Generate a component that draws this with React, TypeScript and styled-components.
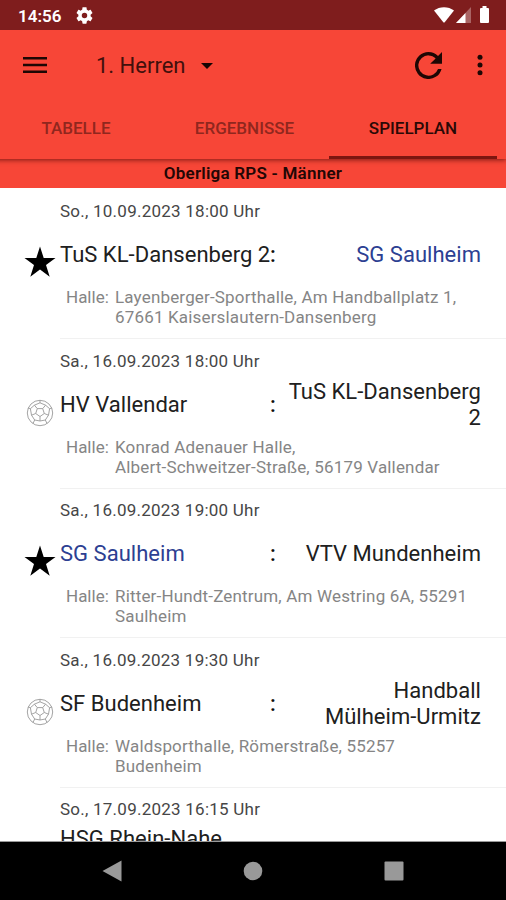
import React from "react";
import styled, { createGlobalStyle } from "styled-components";

const GlobalStyle = createGlobalStyle`
  *, *::before, *::after { box-sizing: border-box; }
  body { margin: 0; background: #fff; font-family: Roboto, "Liberation Sans", sans-serif; }
  svg { display: block; flex: none; }
`;

const Screen = styled.div`
  width: 506px;
  height: 900px;
  display: flex;
  flex-direction: column;
  overflow: hidden;
  background: #fff;
  color: #101010;
`;

const StatusBar = styled.header`
  flex: none;
  height: 30px;
  display: flex;
  align-items: center;
  padding: 0 15px 0 18px;
  background: #7f1d1d;
  color: #fff;
`;

const Clock = styled.span`
  width: 58px;
  font-size: 17px;
  font-weight: 600;
  line-height: 30px;
  letter-spacing: 0;
  padding-top: 2px;
`;

const StatusIcons = styled.div`
  margin-left: auto;
  display: flex;
  align-items: center;
  gap: 2px;
`;

const AppBar = styled.div`
  flex: none;
  position: relative;
  z-index: 2;
  height: 71px;
  display: flex;
  align-items: center;
  padding: 0 20px 1px 23px;
  background: #f74637;
`;

const IconButton = styled.button`
  display: flex;
  padding: 0;
  border: 0;
  background: none;
  color: #1d0704;
`;

const TeamPicker = styled.button`
  display: flex;
  align-items: center;
  gap: 15px;
  margin: 2px auto 0 49px;
  padding: 0;
  border: 0;
  background: none;
  font: 400 22px/30px Roboto, sans-serif;
  color: #42100c;
`;

const Tabs = styled.nav`
  flex: none;
  position: relative;
  z-index: 1;
  height: 58px;
  display: grid;
  grid-template-columns: 168px 169px 168px;
  padding-right: 9px;
  margin-left: -8px;
  background: #f74637;
  box-shadow: 0 1px 5px rgba(60, 0, 0, 0.65);
`;

const Tab = styled.button<{ $active?: boolean }>`
  padding: 0 0 1px;
  border: 0;
  border-bottom: 3px solid ${(p) => (p.$active ? "#7d1610" : "transparent")};
  background: none;
  font: 500 17px/53px Roboto, sans-serif;
  color: ${(p) => (p.$active ? "#2a0906" : "#90271e")};
`;

const LeagueTitle = styled.h1`
  flex: none;
  height: 29px;
  margin: 0;
  background: #f74637;
  text-align: center;
  font-size: 17px;
  font-weight: 600;
  line-height: 29px;
  letter-spacing: 0.23px;
  color: #220705;
`;

const Schedule = styled.main`
  flex: 1;
  min-height: 0;
  overflow: hidden;
  padding-top: 2px;
  border-bottom: 1px solid #999;
`;

const Match = styled.article`
  height: 149.5px;
  display: grid;
  grid-template-columns: 40px 421px;
  grid-template-rows: 38px 53px 46px;
  padding-left: 20px;
`;

const Marker = styled.div<{ $ball?: boolean }>`
  grid-row: 2;
  display: flex;
  justify-content: center;
  padding-top: ${(p) => (p.$ball ? 21 : 18)}px;
`;

const Kickoff = styled.time`
  grid-column: 2;
  font-size: 17px;
  line-height: 20px;
  letter-spacing: 0.24px;
  padding-top: 11px;
  color: #464646;
`;

const Pairing = styled.div<{ $top?: boolean }>`
  grid-column: 2;
  display: grid;
  grid-template-columns: 210px 8px 1fr;
  align-items: ${(p) => (p.$top ? "start" : "center")};
  padding-top: ${(p) => (p.$top ? 0 : 1)}px;
  font-size: 22px;
  line-height: 26px;
  letter-spacing: 0.03px;
`;

const Team = styled.span<{ $own?: boolean; $away?: boolean }>`
  white-space: pre;
  text-align: ${(p) => (p.$away ? "right" : "left")};
  color: ${(p) => (p.$own ? "#2c4092" : "#202020")};
`;

const Colon = styled.span`
  font-weight: 500;
`;

const Venue = styled.div`
  grid-column: 2;
  display: grid;
  grid-template-columns: 49px 1fr;
  padding: 6px 0 0 6px;
  font-size: 17px;
  line-height: 20px;
  color: #858585;
`;

const Address = styled.span`
  white-space: pre;
  letter-spacing: 0.17px;
`;

const Divider = styled.hr`
  grid-column: 2;
  width: 446px;
  height: 1px;
  margin: 11px 0 0;
  border: 0;
  background: #f1f1f1;
`;

const NavBar = styled.footer`
  flex: none;
  height: 58px;
  display: flex;
  align-items: center;
  justify-content: space-between;
  padding: 0 102px;
  background: #000;
`;

const Star = () => (
  <svg width="32" height="32" viewBox="0 0 32 32">
    <path d="M16 .5 19.700 12H31.500L22 19l3.700 11.800L16 23.600 6.300 30.800 10 19 .5 12h11.800z" fill="#000" />
  </svg>
);

const Ball = () => (
  <svg width="28" height="28" viewBox="0 0 28 28" fill="none" stroke="#999" strokeWidth="0.9">
    <circle cx="14" cy="14" r="12.700" />
    <path d="m14 17.500-4.300-3 1.600-4.900h5.400l1.600 4.900zM14 17.500V22M9.700 14.500l-4.200 1.700M11.300 9.600 8.400 6.200M16.700 9.600l2.900-3.400M18.300 14.500l4.200 1.700M8.400 6.200 14 3.800l5.600 2.400M8.400 6.200l-4 3.500 1.100 6.500L8.700 21l5.300 1 5.300-1 3.200-4.800 1.100-6.500-4-3.500M14 3.800V1.300M4.400 9.700 2 9M23.600 9.700 26 9M8.700 21l-1.800 3.600M19.300 21l1.800 3.600" />
  </svg>
);

const Gear = () => (
  <svg width="17" height="17" viewBox="2 2 20 20" fill="#fff">
    <path d="M19.140 12.940c.04-.3.060-.61.060-.94 0-.32-.02-.64-.07-.94l2.030-1.580c.18-.14.230-.41.120-.61l-1.920-3.320c-.12-.22-.37-.29-.59-.22l-2.390.96c-.5-.38-1.030-.7-1.620-.94l-.36-2.540c-.04-.24-.24-.41-.48-.41h-3.840c-.24 0-.43.170-.47.410l-.36 2.540c-.59.240-1.130.570-1.620.940l-2.390-.96c-.22-.08-.47 0-.59.220L2.740 8.870c-.12.210-.08.470.12.610l2.030 1.580c-.05.300-.09.630-.09.940s.02.640.07.940l-2.030 1.580c-.18.140-.23.410-.12.610l1.920 3.320c.12.220.37.290.59.220l2.390-.96c.5.380 1.030.700 1.620.940l.36 2.540c.05.240.24.410.48.410h3.840c.24 0 .44-.17.470-.41l.36-2.540c.59-.24 1.130-.56 1.620-.94l2.390.96c.22.080.47 0 .59-.22l1.920-3.320c.12-.22.070-.47-.12-.61l-2.010-1.580zM12 15.200A3.200 3.200 0 1 1 12 8.800a3.200 3.200 0 0 1 0 6.400z" />
  </svg>
);

type Fixture = {
  kickoff: string;
  home: string;
  away?: string;
  own?: "home" | "away";
  venue?: string;
};

const fixtures: Fixture[] = [
  {
    kickoff: "So., 10.09.2023 18:00 Uhr",
    home: "TuS KL-Dansenberg 2",
    away: "SG Saulheim",
    own: "away",
    venue: "Layenberger-Sporthalle, Am Handballplatz 1,\n67661 Kaiserslautern-Dansenberg",
  },
  {
    kickoff: "Sa., 16.09.2023 18:00 Uhr",
    home: "HV Vallendar",
    away: "TuS KL-Dansenberg\n2",
    venue: "Konrad Adenauer Halle,\nAlbert-Schweitzer-Straße, 56179 Vallendar",
  },
  {
    kickoff: "Sa., 16.09.2023 19:00 Uhr",
    home: "SG Saulheim",
    away: "VTV Mundenheim",
    own: "home",
    venue: "Ritter-Hundt-Zentrum, Am Westring 6A, 55291\nSaulheim",
  },
  {
    kickoff: "Sa., 16.09.2023 19:30 Uhr",
    home: "SF Budenheim",
    away: "Handball\nMülheim-Urmitz",
    venue: "Waldsporthalle, Römerstraße, 55257\nBudenheim",
  },
  { kickoff: "So., 17.09.2023 16:15 Uhr", home: "HSG Rhein-Nahe" },
];

export default function App() {
  return (
    <Screen>
      <GlobalStyle />
      <StatusBar>
        <Clock>14:56</Clock>
        <Gear />
        <StatusIcons>
          <svg width="20" height="16" viewBox="0 0 20 16">
            <path d="M0 3.500C5.500-1 14.500-1 20 3.500L10.500 15.500h-1z" fill="#fff" />
          </svg>
          <svg width="15" height="16" viewBox="0 0 15 16">
            <path d="M0 16 15 0v16z" fill="#a96464" />
            <path d="M0 16 9.500 5.900V16z" fill="#fff" />
          </svg>
          <svg width="18" height="18" viewBox="0 0 18 18">
            <path d="M9.500 0h4v2h1.500q1 0 1 1v13q0 1-1 1H8q-1 0-1-1V3q0-1 1-1h1.500z" fill="#fff" />
          </svg>
        </StatusIcons>
      </StatusBar>
      <AppBar>
        <IconButton aria-label="Menü">
          <svg width="24" height="18" viewBox="0 0 24 18" fill="currentColor">
            <path d="M0 1h24v2.500H0zM0 7.800h24v2.500H0zM0 14.500h24V17H0z" />
          </svg>
        </IconButton>
        <TeamPicker>
          1. Herren
          <svg width="12" height="6" viewBox="0 0 12 6">
            <path d="M0 0h12L6 6z" fill="#160403" />
          </svg>
        </TeamPicker>
        <IconButton aria-label="Aktualisieren">
          <svg width="27" height="27" viewBox="4 4 16 16" fill="currentColor">
            <path d="M17.650 6.350A7.950 7.950 0 0 0 12 4a8 8 0 1 0 7.730 10h-2.080A6 6 0 1 1 12 6c1.660 0 3.140.690 4.220 1.780L13 11h7V4l-2.350 2.350z" />
          </svg>
        </IconButton>
        <IconButton aria-label="Mehr">
          <svg width="44" height="22" viewBox="0 0 44 22" fill="currentColor">
            <circle cx="38" cy="3.300" r="2.500" />
            <circle cx="38" cy="11" r="2.500" />
            <circle cx="38" cy="18.700" r="2.500" />
          </svg>
        </IconButton>
      </AppBar>
      <Tabs>
        <Tab>TABELLE</Tab>
        <Tab>ERGEBNISSE</Tab>
        <Tab $active>SPIELPLAN</Tab>
      </Tabs>
      <LeagueTitle>Oberliga RPS - Männer</LeagueTitle>
      <Schedule>
        {fixtures.map((f) => (
          <Match key={f.kickoff + f.home}>
            <Kickoff>{f.kickoff}</Kickoff>
            {f.venue && <Marker $ball={!f.own}>{f.own ? <Star /> : <Ball />}</Marker>}
            <Pairing $top={!f.venue}>
              <Team $own={f.own === "home"}>{f.home}</Team>
              {f.away && <Colon>:</Colon>}
              {f.away && (
                <Team $away $own={f.own === "away"}>
                  {f.away}
                </Team>
              )}
            </Pairing>
            {f.venue && (
              <Venue>
                <span>Halle:</span>
                <Address>{f.venue}</Address>
              </Venue>
            )}
            {f.venue && <Divider />}
          </Match>
        ))}
      </Schedule>
      <NavBar>
        <svg width="20" height="22" viewBox="0 0 20 22">
          <path d="M.5 11 19.500.5v21z" fill="#999" />
        </svg>
        <svg width="20" height="20" viewBox="0 0 20 20">
          <circle cx="10" cy="10" r="9.300" fill="#999" />
        </svg>
        <svg width="20" height="20" viewBox="0 0 20 20">
          <rect x=".5" y=".5" width="19" height="19" rx="1" fill="#999" />
        </svg>
      </NavBar>
    </Screen>
  );
}
